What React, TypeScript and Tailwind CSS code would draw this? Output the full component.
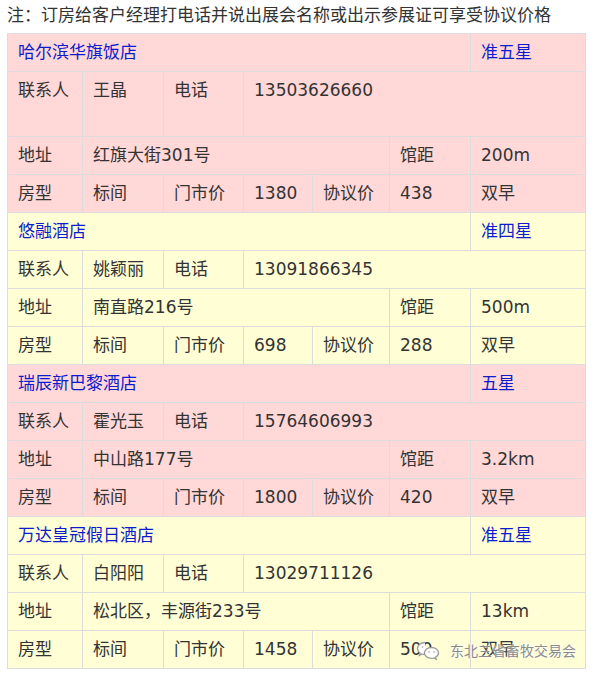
type Hotel = {
  name: string
  star: string
  contact: string
  phone: string
  address: string
  distance: string
  rack: string
  deal: string
  tall?: boolean
  bg: string
}

const hotels: Hotel[] = [
  {
    name: '哈尔滨华旗饭店',
    star: '准五星',
    contact: '王晶',
    phone: '13503626660',
    address: '红旗大街301号',
    distance: '200m',
    rack: '1380',
    deal: '438',
    tall: true,
    bg: 'bg-[#ffd8d7]',
  },
  {
    name: '悠融酒店',
    star: '准四星',
    contact: '姚颖丽',
    phone: '13091866345',
    address: '南直路216号',
    distance: '500m',
    rack: '698',
    deal: '288',
    bg: 'bg-[#fffed5]',
  },
  {
    name: '瑞辰新巴黎酒店',
    star: '五星',
    contact: '霍光玉',
    phone: '15764606993',
    address: '中山路177号',
    distance: '3.2km',
    rack: '1800',
    deal: '420',
    bg: 'bg-[#ffd8d7]',
  },
  {
    name: '万达皇冠假日酒店',
    star: '准五星',
    contact: '白阳阳',
    phone: '13029711126',
    address: '松北区，丰源街233号',
    distance: '13km',
    rack: '1458',
    deal: '500',
    bg: 'bg-[#fffed5]',
  },
]

const td = 'border border-[#dcdcdc] px-[10px] py-[5px] align-top'

function HotelRows({ h }: { h: Hotel }) {
  return (
    <>
      <tr className={h.bg}>
        <td colSpan={6} className={`${td} text-[#0c1ccc]`}>
          {h.name}
        </td>
        <td className={`${td} text-[#0c1ccc]`}>{h.star}</td>
      </tr>
      <tr className={h.bg}>
        <td className={td}>联系人</td>
        <td className={td}>{h.contact}</td>
        <td className={td}>电话</td>
        <td colSpan={4} className={td}>
          {h.phone}
          {h.tall && (
            <>
              <br />
              {'\u00a0'}
            </>
          )}
        </td>
      </tr>
      <tr className={h.bg}>
        <td className={td}>地址</td>
        <td colSpan={4} className={td}>
          {h.address}
        </td>
        <td className={td}>馆距</td>
        <td className={td}>{h.distance}</td>
      </tr>
      <tr className={h.bg}>
        <td className={td}>房型</td>
        <td className={td}>标间</td>
        <td className={td}>门市价</td>
        <td className={td}>{h.rack}</td>
        <td className={td}>协议价</td>
        <td className={td}>{h.deal}</td>
        <td className={td}>双早</td>
      </tr>
    </>
  )
}

function WechatMark() {
  return (
    <svg width="24" height="20" viewBox="0 0 24 20" fill="none" stroke="#9a9a9a" strokeWidth="1.3">
      <path d="M9 1.5c-4.2 0-7.5 2.7-7.5 6 0 1.9 1 3.5 2.6 4.6l-.7 2.3 2.7-1.4c.9.3 1.9.5 2.9.5" fill="#fff" />
      <path d="M15.5 6.5c-3.9 0-7 2.4-7 5.4s3.1 5.4 7 5.4c.8 0 1.6-.1 2.3-.3l2.3 1.2-.6-2c1.8-1 3-2.6 3-4.3 0-3-3.1-5.4-7-5.4z" fill="#fff" />
      <circle cx="13" cy="11" r=".8" fill="#9a9a9a" stroke="none" />
      <circle cx="18" cy="11" r=".8" fill="#9a9a9a" stroke="none" />
      <circle cx="6.5" cy="6" r=".8" fill="#9a9a9a" stroke="none" />
    </svg>
  )
}

export default function App() {
  return (
    <div
      className="relative w-[593px] h-[679px] bg-white pl-[7px] text-[17px] leading-[27px] text-[#333]"
      style={{ fontFamily: '"DejaVu Sans", "Noto Sans CJK SC", sans-serif' }}
    >
      <p className="h-[33px] pt-[2px] leading-[27px]">
        注：订房给客户经理打电话并说出展会名称或出示参展证可享受协议价格
      </p>
      <table className="w-[578px] table-fixed border-collapse">
        <colgroup>
          <col className="w-[75px]" />
          <col className="w-[81px]" />
          <col className="w-[80px]" />
          <col className="w-[69px]" />
          <col className="w-[77px]" />
          <col className="w-[81px]" />
          <col className="w-[115px]" />
        </colgroup>
        <tbody>
          {hotels.map((h) => (
            <HotelRows key={h.name} h={h} />
          ))}
        </tbody>
      </table>
      <div className="absolute left-[416px] top-[641px] flex items-center gap-[10px]">
        <WechatMark />
        <span
          className="text-[14px] leading-[20px] text-[#8a8a8a]"
          style={{ textShadow: '0 0 2px #fff, 0 0 2px #fff' }}
        >
          东北三省畜牧交易会
        </span>
      </div>
    </div>
  )
}
